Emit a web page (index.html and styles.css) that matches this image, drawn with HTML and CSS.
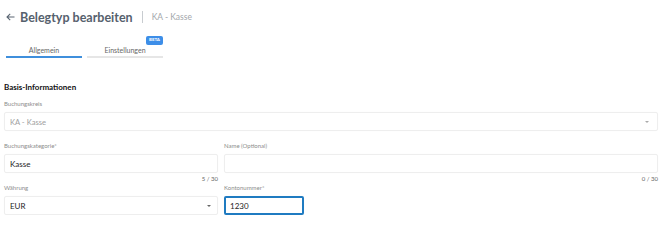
FILE: index.html
```html
<!DOCTYPE html>
<html lang="de">
<head>
<meta charset="utf-8">
<link rel="stylesheet" href="styles.css">
</head>
<body>
<div class="page">
  <header class="head">
    <svg class="back" width="9" height="8" viewBox="0 0 9 8"><path d="M8.5 4H1M4.2 0.8L1 4l3.2 3.2" fill="none" stroke="#5a6572" stroke-width="1.1"/></svg>
    <h1 class="title">Belegtyp bearbeiten</h1>
    <span class="sep"></span>
    <span class="sub">KA - Kasse</span>
  </header>
  <nav class="tabs">
    <div class="tab active">Allgemein</div>
    <div class="tab">Einstellungen<span class="beta">BETA</span></div>
  </nav>
  <h2 class="section">Basis-Informationen</h2>
  <div class="field">
    <div class="label">Buchungskreis</div>
    <div class="box disabled"><span>KA - Kasse</span><span class="caret"></span></div>
  </div>
  <div class="grid">
    <div class="field">
      <div class="label">Buchungskategorie*</div>
      <div class="box"><span>Kasse</span></div>
      <div class="count">5 / 30</div>
    </div>
    <div class="field">
      <div class="label">Name (Optional)</div>
      <div class="box"></div>
      <div class="count">0 / 30</div>
    </div>
    <div class="field">
      <div class="label">Währung</div>
      <div class="box"><span>EUR</span><span class="caret dark"></span></div>
    </div>
    <div class="field">
      <div class="label">Kontonummer*</div>
      <div class="box focus"><span>1230</span></div>
    </div>
  </div>
</div>
</body>
</html>
```

FILE: styles.css
```css
* { box-sizing: border-box; margin: 0; padding: 0; }
body { background: #fff; font-family: Lato, "Open Sans", sans-serif; color: #333; }
.page { width: 658px; padding: 0 0 0 4px; }
.head { display: flex; align-items: center; height: 34px; padding-left: 2px; }
.back { margin-right: 5px; }
.title { font-size: 12.5px; font-weight: 700; color: #56616d; }
.sep { width: 1px; height: 12px; background: #c8ccd0; margin: 0 9px 0 9px; }
.sub { font-size: 8.5px; color: #a3a7ab; }
.tabs { display: flex; gap: 5px; padding-left: 2px; margin-top: 8px; }
.tab { position: relative; width: 76px; height: 16px; text-align: center; font-size: 7px; color: #666; border-bottom: 2px solid #e6e6e6; line-height: 16px; }
.tab.active { border-bottom-color: #3f8fdc; }
.beta { position: absolute; right: 0; top: -6px; background: #3d8ee8; color: #fff; font-size: 4.5px; font-weight: 700; padding: 2px 3px; border-radius: 2px; line-height: 4.5px; }
.section { font-size: 8px; font-weight: 700; color: #111; margin-top: 22px; height: 14px; line-height: 14px; }
.field { display: flex; flex-direction: column; }
.label { font-size: 6px; color: #8c8c8c; height: 15px; line-height: 14px; margin-top: 3px; }
.box { height: 19px; border: 1px solid #eeeeee; border-radius: 2px; display: flex; align-items: center; justify-content: space-between; padding: 0 8px 0 5px; font-size: 8px; color: #1e1e1e; box-shadow: 0 0 1px rgba(0,0,0,0.04); }
.box.disabled { color: #a0a0a0; font-size: 7.6px; }
.box.focus { border: 2px solid #1f7bc1; width: 80px; padding-left: 4px; }
.caret { width: 0; height: 0; border-left: 2px solid transparent; border-right: 2px solid transparent; border-top: 2px solid #aaa; }
.caret.dark { border-top-color: #666; margin-right: -2px; }
.grid { display: grid; grid-template-columns: 214px 434px; column-gap: 6px; row-gap: 3px; margin-top: 5px; }
.count { font-size: 6px; color: #666; text-align: right; height: 8px; line-height: 8px; margin-top: 2px; margin-bottom: -8px; }
```
